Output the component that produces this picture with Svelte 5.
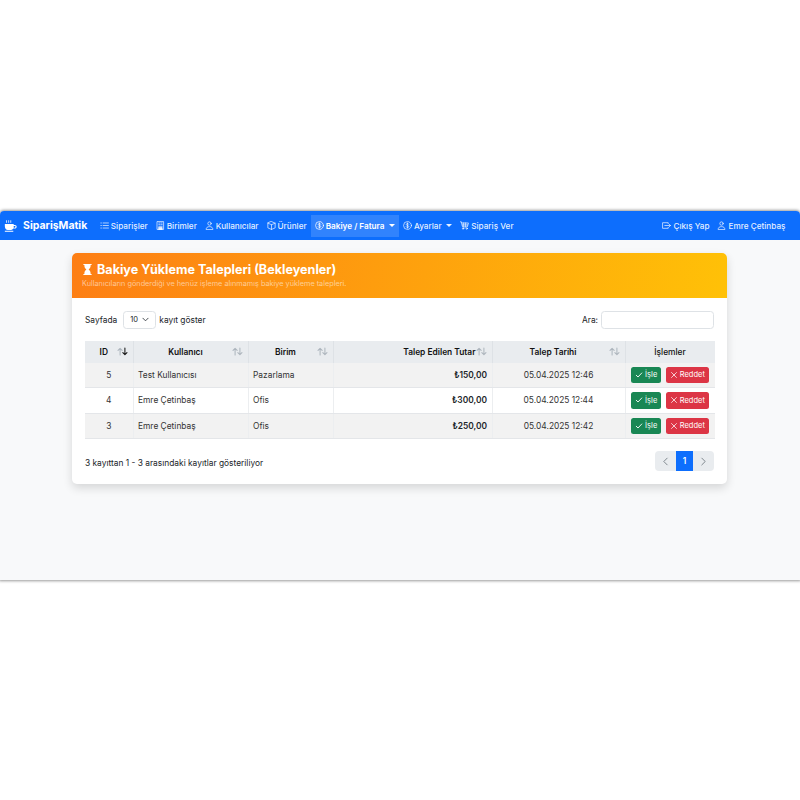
<script lang="ts">
	const navItems = [
		{ icon: 'list', label: 'Siparişler' },
		{ icon: 'building', label: 'Birimler' },
		{ icon: 'person', label: 'Kullanıcılar' },
		{ icon: 'box', label: 'Ürünler' },
		{ icon: 'coin', label: 'Bakiye / Fatura', caret: true, active: true },
		{ icon: 'coin', label: 'Ayarlar', caret: true },
		{ icon: 'cart', label: 'Sipariş Ver' }
	];

	const columns = [
		{ label: 'ID', cls: 'c-id', sort: 'down' },
		{ label: 'Kullanıcı', cls: 'c-user', sort: 'none' },
		{ label: 'Birim', cls: 'c-unit', sort: 'none' },
		{ label: 'Talep Edilen Tutar', cls: 'c-amount', sort: 'none' },
		{ label: 'Talep Tarihi', cls: 'c-date', sort: 'none' },
		{ label: 'İşlemler', cls: 'c-actions', sort: '' }
	];

	const rows = [
		{ id: 5, user: 'Test Kullanıcısı', unit: 'Pazarlama', amount: '₺150,00', date: '05.04.2025 12:46' },
		{ id: 4, user: 'Emre Çetinbaş', unit: 'Ofis', amount: '₺300,00', date: '05.04.2025 12:44' },
		{ id: 3, user: 'Emre Çetinbaş', unit: 'Ofis', amount: '₺250,00', date: '05.04.2025 12:42' }
	];
</script>

{#snippet icon(name: string)}
	<svg class="ico" viewBox="0 0 16 16" fill="none" stroke="currentColor" stroke-width="1.300" stroke-linecap="round" stroke-linejoin="round">
		{#if name === 'list'}
			<path d="M5.500 3.500H15M5.500 8H15M5.500 12.500H15M1.500 3.500h1M1.500 8h1M1.500 12.500h1" />
		{:else if name === 'building'}
			<path d="M2.500 1h11v14h-11zM5 3.500h2M9 3.500h2M5 6.500h2M9 6.500h2M5 9.500h6" />
			<path d="M5 11.500h6V15H5z" fill="currentColor" />
		{:else if name === 'person'}
			<circle cx="8" cy="4.500" r="3" />
			<path d="M2 14.500c0-3 2.500-4.500 6-4.500s6 1.500 6 4.500z" />
		{:else if name === 'box'}
			<path d="M8 1l6.500 2.800v8.400L8 15l-6.500-2.800V3.800zM1.500 3.800L8 6.600l6.500-2.800M8 6.600V15" />
		{:else if name === 'coin'}
			<circle cx="8" cy="8" r="7" />
			<path d="M10.300 5.800C10 4.800 9 4.500 8 4.500c-1.300 0-2.300.6-2.300 1.700 0 2.400 4.700 1.200 4.700 3.600 0 1.100-1 1.700-2.400 1.700-1.200 0-2.200-.5-2.500-1.500M8 3.300v9.400" />
		{:else if name === 'cart'}
			<path d="M.5 1.500h2l2 9h8.500l2-7H3.200M6.500 3.500v7M10 3.500v7M3.800 7h10" />
			<circle cx="5.500" cy="13.500" r="1.200" />
			<circle cx="12" cy="13.500" r="1.200" />
		{:else if name === 'logout'}
			<path d="M11 4.500V3H1v10h10v-1.500M5 8h10M12.500 5.500L15 8l-2.500 2.500" />
		{:else if name === 'check'}
			<path d="M2.500 8.500l3.500 3.500 7.500-8" stroke-width="1.800" />
		{:else if name === 'x'}
			<path d="M3 3l10 10M13 3L3 13" stroke-width="1.500" />
		{:else if name === 'prev'}
			<path d="M11 2L5 8l6 6" stroke-width="1.500" />
		{:else if name === 'next'}
			<path d="M5 2l6 6-6 6" stroke-width="1.500" />
		{/if}
	</svg>
{/snippet}

{#snippet sortArrows(state: string)}
	<svg class="sort" viewBox="0 0 16 12" fill="none" stroke-width="1.500" stroke-linecap="round" stroke-linejoin="round">
		<path d="M4.500 11V1.500M1.500 4.500l3-3 3 3" stroke="#adb5bd" />
		<path d="M11.500 1v9.500M8.500 7.500l3 3 3-3" stroke={state === 'down' ? '#111' : '#adb5bd'} />
	</svg>
{/snippet}

<div class="stage">
	<div class="window">
		<nav class="navbar">
			<a class="brand" href="#top">
				<svg class="cup" viewBox="0 0 16 16" fill="currentColor">
					<path d="M1 6h10.500v1h1.300c1.300 0 2.200.9 2.200 2.200s-.9 2.200-2.200 2.200h-1.700c-.7 1.100-1.600 1.600-2.600 1.600H4.500C2.500 13 1 11 1 8.500zM11.500 8.300v2h1.200c.6 0 1-.4 1-1s-.4-1-1-1zM1 14h10v1.200H1z" />
					<path d="M3 1.500v3M5.500 1.500v3M8 1.500v3" stroke="currentColor" stroke-width=".9" fill="none" />
				</svg>
				SiparişMatik
			</a>
			<ul class="nav-list">
				{#each navItems as item}
					<li class="nav-item" class:active={item.active}>
						{@render icon(item.icon)}
						{item.label}
						{#if item.caret}<span class="caret"></span>{/if}
					</li>
				{/each}
			</ul>
			<ul class="nav-list nav-end">
				<li class="nav-item">{@render icon('logout')} Çıkış Yap</li>
				<li class="nav-item">{@render icon('person')} Emre Çetinbaş</li>
			</ul>
		</nav>

		<main class="content">
			<section class="card">
				<header class="card-header">
					<h1>
						<svg class="hourglass" viewBox="0 0 16 16" fill="currentColor">
							<path d="M2 0h12v1.500h-1.500V3c0 2-1.300 3.900-2.900 5 1.600 1.100 2.900 3 2.900 5v1.500H14V16H2v-1.500h1.500V13c0-2 1.300-3.900 2.900-5C4.800 6.900 3.500 5 3.500 3V1.500H2z" />
						</svg>
						Bakiye Yükleme Talepleri (Bekleyenler)
					</h1>
					<p>Kullanıcıların gönderdiği ve henüz işleme alınmamış bakiye yükleme talepleri.</p>
				</header>

				<div class="card-body">
					<div class="table-top">
						<div class="length">
							Sayfada
							<span class="select">10
								<svg viewBox="0 0 16 16" fill="none" stroke="#343a40" stroke-width="2" stroke-linecap="round" stroke-linejoin="round"><path d="M2 5l6 6 6-6" /></svg>
							</span>
							kayıt göster
						</div>
						<div class="search">Ara: <span class="search-input"></span></div>
					</div>

					<table>
						<thead>
							<tr>
								{#each columns as col}
									<th class={col.cls}>
										{col.label}
										{#if col.sort}{@render sortArrows(col.sort)}{/if}
									</th>
								{/each}
							</tr>
						</thead>
						<tbody>
							{#each rows as row}
								<tr>
									<td class="center">{row.id}</td>
									<td>{row.user}</td>
									<td>{row.unit}</td>
									<td class="amount">{row.amount}</td>
									<td class="center">{row.date}</td>
									<td>
										<div class="actions">
											<button class="btn green" type="button">{@render icon('check')} İşle</button>
											<button class="btn red" type="button">{@render icon('x')} Reddet</button>
										</div>
									</td>
								</tr>
							{/each}
						</tbody>
					</table>

					<div class="table-bottom">
						<span class="info">3 kayıttan 1 - 3 arasındaki kayıtlar gösteriliyor</span>
						<div class="pager">
							<span class="page muted">{@render icon('prev')}</span>
							<span class="page current">1</span>
							<span class="page muted">{@render icon('next')}</span>
						</div>
					</div>
				</div>
			</section>
		</main>
	</div>
</div>

<style>
	:global(body) {
		background: #fff;
	}

	.stage {
		height: 800px;
		padding-top: 211px;
		box-sizing: border-box;
		font-family: Inter, "Noto Sans", sans-serif;
		color: #212529;
		font-size: 8.4px;
	}

	.window {
		height: 369px;
		background: #f8f9fa;
		border-radius: 4px 4px 0 0;
		box-shadow: 0 0 3px 1px rgba(0, 0, 0, 0.4);
		overflow: hidden;
	}

	.navbar {
		height: 29px;
		background: #0d6efd;
		color: #fff;
		display: flex;
		align-items: center;
		padding: 0 10.500px 0 4px;
	}

	.brand {
		display: flex;
		align-items: center;
		gap: 5.500px;
		font-size: 10.500px;
		font-weight: 700;
		color: #fff;
		text-decoration: none;
		margin-right: 8.500px;
	}

	.cup {
		width: 13.500px;
		height: 13.500px;
	}

	.nav-list {
		display: flex;
		align-items: center;
		list-style: none;
		margin: 0;
		padding: 0;
	}

	.nav-end {
		margin-left: auto;
	}

	.nav-item {
		display: flex;
		align-items: center;
		gap: 2px;
		height: 22px;
		padding: 0 4px;
		color: rgba(255, 255, 255, 0.9);
		font-size: 8.200px;
		white-space: nowrap;
		font-weight: 500;
	}

	.nav-item.active {
		background: rgba(255, 255, 255, 0.15);
		color: #fff;
		font-weight: 600;
	}

	.ico {
		width: 9px;
		height: 9px;
		flex: none;
	}

	.caret {
		margin-left: 2.500px;
		border-top: 3px solid currentColor;
		border-left: 3px solid transparent;
		border-right: 3px solid transparent;
	}

	.content {
		padding: 13px 73px 0 72px;
	}

	.card {
		background: #fff;
		border-radius: 5px;
		box-shadow: 0 4px 10px rgba(0, 0, 0, 0.14);
		overflow: hidden;
	}

	.card-header {
		height: 45px;
		box-sizing: border-box;
		padding: 9px 10px 0;
		color: #fff;
		background: linear-gradient(100deg, #fd7e14, #ffc107);
	}

	.card-header h1 {
		display: flex;
		align-items: center;
		gap: 4px;
		margin: 0;
		font-size: 12.600px;
		font-weight: 700;
		line-height: 15px;
	}

	.hourglass {
		width: 11px;
		height: 11px;
	}

	.card-header p {
		margin: 2px 0 0;
		font-size: 7.300px;
		line-height: 10px;
		color: rgba(255, 255, 255, 0.55);
	}

	.card-body {
		padding: 12px 13px 0;
		height: 186px;
		box-sizing: border-box;
	}

	.table-top {
		display: flex;
		justify-content: space-between;
		align-items: center;
		height: 19px;
		margin-bottom: 12px;
	}

	.length,
	.search {
		display: flex;
		align-items: center;
		gap: 3px;
	}

	.select {
		display: flex;
		align-items: center;
		justify-content: space-between;
		width: 33px;
		height: 18px;
		margin-left: 3px;
		padding: 0 6px;
		box-sizing: border-box;
		font-size: 7.500px;
		border: 1px solid #dee2e6;
		border-radius: 3.500px;
	}

	.select svg {
		width: 7px;
		height: 7px;
	}

	.search-input {
		display: block;
		width: 113px;
		height: 18px;
		box-sizing: border-box;
		border: 1px solid #dee2e6;
		border-radius: 3.500px;
	}

	table {
		width: 629px;
		border-collapse: collapse;
		table-layout: fixed;
	}

	th {
		position: relative;
		height: 21.500px;
		padding: 0;
		background: #e9ecef;
		font-weight: 600;
		text-align: center;
		color: #111;
		border-right: 1px solid #dee2e6;
	}

	th:last-child {
		border-right: 0;
		font-weight: 500;
	}

	.sort {
		position: absolute;
		top: 6px;
		right: 5px;
		width: 11px;
		height: 9px;
	}

	.c-id { width: 48px; padding-right: 10px; box-sizing: border-box; }
	.c-user { width: 115px; padding-right: 10px; box-sizing: border-box; }
	.c-unit { width: 85px; padding-right: 10px; box-sizing: border-box; }
	.c-amount { width: 159px; text-align: right; padding-right: 16px; box-sizing: border-box; }
	.c-date { width: 133px; padding-right: 11px; box-sizing: border-box; }
	.c-actions { width: 89px; }

	td {
		height: 24.500px;
		padding: 0 4.500px;
		border-right: 1px solid #eceef0;
		border-bottom: 1px solid #e4e6e9;
		color: #333;
	}

	td:last-child {
		border-right: 0;
		padding: 0;
	}

	tbody tr:nth-child(odd) td {
		background: #f2f2f2;
	}

	.center {
		text-align: center;
	}

	.amount {
		text-align: right;
		font-weight: 600;
		color: #212529;
	}

	.actions {
		display: flex;
		justify-content: center;
		gap: 4.500px;
	}

	.btn {
		display: flex;
		align-items: center;
		gap: 2px;
		height: 16.500px;
		padding: 0 4px;
		font: inherit;
		font-size: 7.500px;
		color: #fff;
		border: 0;
		border-radius: 2.500px;
		white-space: nowrap;
	}

	.btn .ico {
		width: 8px;
		height: 8px;
	}

	.green {
		background: #198754;
	}

	.red {
		background: #dc3545;
	}

	.table-bottom {
		display: flex;
		justify-content: space-between;
		align-items: flex-start;
		margin-top: 12px;
		height: 21px;
	}

	.info {
		padding-top: 7px;
	}

	.pager {
		display: flex;
		height: 20px;
		border-radius: 4px;
		overflow: hidden;
	}

	.page {
		display: flex;
		align-items: center;
		justify-content: center;
		font-size: 8.400px;
		font-weight: 600;
	}

	.page.muted {
		width: 21px;
		color: #6c757d;
		background: #e9ecef;
	}

	.page.current {
		width: 17px;
		color: #fff;
		background: #0d6efd;
	}
</style>
